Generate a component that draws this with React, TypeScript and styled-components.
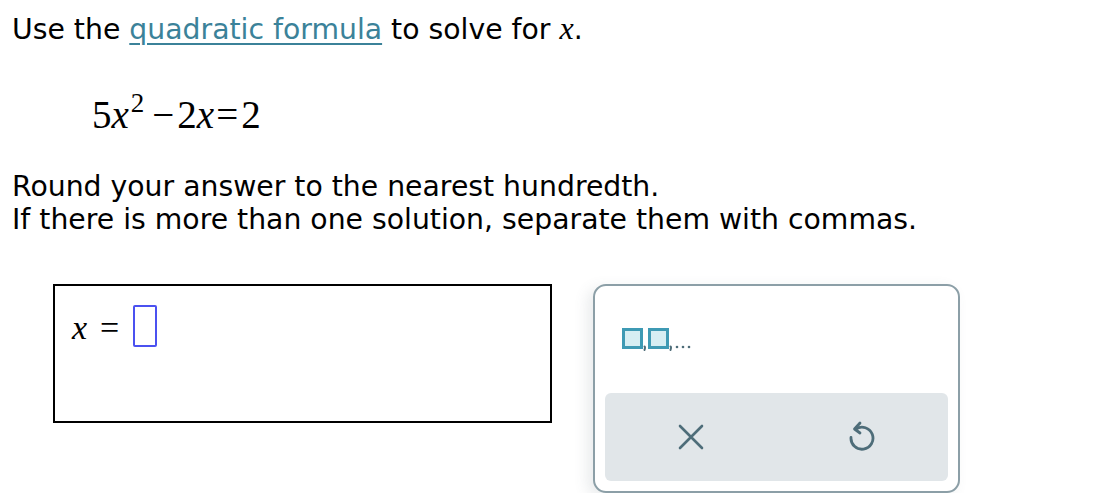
import styled, { createGlobalStyle } from "styled-components";

const Global = createGlobalStyle`
  body {
    margin: 0;
    background: #fff;
    font-family: "DejaVu Sans", Verdana, sans-serif;
    color: #000;
  }
`;

const Page = styled.div`
  padding: 10px 0 0 12px;
`;

const Prompt = styled.p`
  margin: 0;
  font-size: 28.3px;
  line-height: 36px;
`;

const Link = styled.a`
  color: #3b8299;
  text-decoration: underline;
  text-decoration-thickness: 2px;
  text-underline-offset: 4px;
`;

const MathVar = styled.span`
  font-family: "Liberation Serif", "Times New Roman", serif;
  font-style: italic;
  font-size: 32px;
`;

const Equation = styled.div`
  margin: 47px 0 0 80px;
  font-family: "Liberation Serif", "Times New Roman", serif;
  font-size: 39px;
  line-height: 40px;
  display: flex;
  align-items: baseline;
`;

const Op = styled.span<{ $left?: number; $right?: number }>`
  margin: 0 ${(p) => p.$right ?? 0}px 0 ${(p) => p.$left ?? 0}px;
`;

const Sup = styled.span`
  font-size: 27px;
  position: relative;
  top: -16px;
  margin-left: 2px;
`;

const Instructions = styled.div`
  margin-top: 31px;
  font-size: 28.3px;
  line-height: 33px;
`;

const Row = styled.div`
  display: flex;
  align-items: flex-start;
  margin: 48px 0 0 41px;
`;

const AnswerBox = styled.div`
  box-sizing: border-box;
  width: 499px;
  height: 139px;
  border: 2px solid #000;
  padding: 19px 0 0 17px;
`;

const AnswerLine = styled.div`
  display: flex;
  align-items: center;
  height: 42px;
`;

const AnswerVar = styled.span`
  font-family: "Liberation Serif", "Times New Roman", serif;
  font-style: italic;
  font-size: 34px;
  position: relative;
  top: 2px;
`;

const Equals = styled.span`
  font-family: "Liberation Serif", "Times New Roman", serif;
  font-size: 34px;
  margin: 0 14px 0 13px;
  position: relative;
  top: 2px;
`;

const Slot = styled.span`
  box-sizing: border-box;
  width: 24px;
  height: 42px;
  border: 2px solid #4b51f0;
  border-radius: 2px;
  display: inline-block;
`;

const Panel = styled.div`
  box-sizing: border-box;
  margin-left: 41px;
  width: 367px;
  height: 209px;
  border: 2px solid #8c9fa7;
  border-radius: 13px;
  box-shadow: -6px 4px 14px rgba(80, 100, 110, 0.12);
  padding: 43px 10px 10px 10px;
  display: flex;
  flex-direction: column;
`;

const KeyRow = styled.div`
  padding-left: 17px;
  height: 22px;
  display: flex;
  align-items: flex-end;
`;

const Actions = styled.div`
  margin-top: auto;
  height: 88px;
  background: #e1e6e9;
  border-radius: 6px;
  display: grid;
  grid-template-columns: 1fr 1fr;
  align-items: center;
  justify-items: center;
`;

const IconButton = styled.button<{ $shiftX?: number }>`
  border: 0;
  background: transparent;
  padding: 0;
  width: 32px;
  height: 36px;
  margin-left: ${(p) => p.$shiftX ?? 0}px;
  display: flex;
  align-items: center;
  justify-content: center;
  color: #4e6d79;
`;

function ListIcon() {
  return (
    <svg width="76" height="23" viewBox="0 0 76 23">
      <rect x="1.5" y="1.5" width="18" height="18" fill="#d6eef3" stroke="#3e9ab4" strokeWidth="3" />
      <path d="M22.5 18.5 q1 0 0 3.5" stroke="#4e6d79" strokeWidth="2" fill="none" strokeLinecap="round" />
      <rect x="27.5" y="1.5" width="18" height="18" fill="#d6eef3" stroke="#3e9ab4" strokeWidth="3" />
      <path d="M48.5 18.5 q1 0 0 3.5" stroke="#4e6d79" strokeWidth="2" fill="none" strokeLinecap="round" />
      <circle cx="55" cy="19" r="1.3" fill="#4e6d79" />
      <circle cx="61" cy="19" r="1.3" fill="#4e6d79" />
      <circle cx="67" cy="19" r="1.3" fill="#4e6d79" />
    </svg>
  );
}

function ClearIcon() {
  return (
    <svg width="26" height="26" viewBox="0 0 26 26">
      <path d="M2 2 L24 24 M24 2 L2 24" stroke="currentColor" strokeWidth="2.6" strokeLinecap="round" />
    </svg>
  );
}

function UndoIcon() {
  return (
    <svg width="28" height="34" viewBox="0 0 28 34">
      <path
        d="M9 9 A11 11 0 1 1 4 17.5"
        stroke="currentColor"
        strokeWidth="2.8"
        fill="none"
        strokeLinecap="round"
      />
      <path d="M13 3 L7.5 9 L13 13" stroke="currentColor" strokeWidth="2.8" fill="none" strokeLinecap="round" strokeLinejoin="round" />
    </svg>
  );
}

export default function App() {
  return (
    <>
      <Global />
      <Page>
        <Prompt>
          Use the <Link>quadratic formula</Link> to solve for <MathVar>x</MathVar>.
        </Prompt>
        <Equation>
          <span>5</span>
          <i>x</i>
          <Sup>2</Sup>
          <Op $left={8} $right={3}>−</Op>
          <span>2</span>
          <i>x</i>
          <Op $left={2} $right={3}>=</Op>
          <span>2</span>
        </Equation>
        <Instructions>
          Round your answer to the nearest hundredth.
          <br />
          If there is more than one solution, separate them with commas.
        </Instructions>
        <Row>
          <AnswerBox>
            <AnswerLine>
              <AnswerVar>x</AnswerVar>
              <Equals>=</Equals>
              <Slot />
            </AnswerLine>
          </AnswerBox>
          <Panel>
            <KeyRow>
              <ListIcon />
            </KeyRow>
            <Actions>
              <IconButton aria-label="clear">
                <ClearIcon />
              </IconButton>
              <IconButton aria-label="undo" $shiftX={-2}>
                <UndoIcon />
              </IconButton>
            </Actions>
          </Panel>
        </Row>
      </Page>
    </>
  );
}
